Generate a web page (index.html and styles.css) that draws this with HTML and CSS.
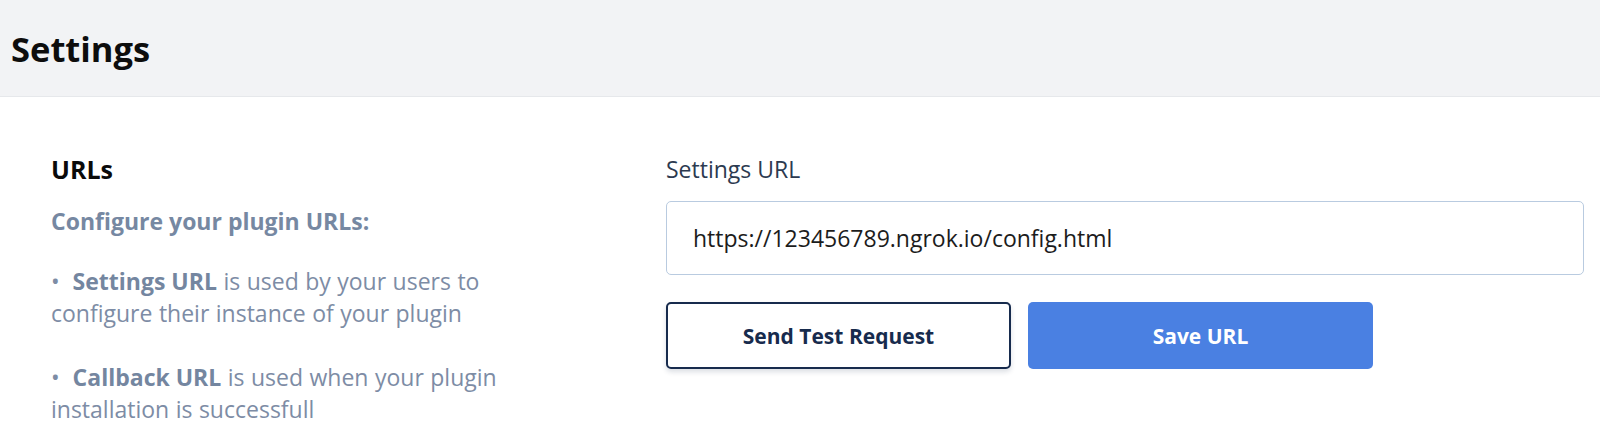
FILE: index.html
```html
<!DOCTYPE html>
<html lang="en">
<head>
    <meta charset="UTF-8">
    <meta name="viewport" content="width=device-width, initial-scale=1.0">
    <title>Settings</title>
    <link rel="stylesheet" href="styles.css">
</head>
<body>
    <header class="page-header">
        <h1>Settings</h1>
    </header>

    <main class="section">
        <div class="section-info">
            <h2>URLs</h2>
            <p class="lead">Configure your plugin URLs:</p>
            <p class="note">&bull;&nbsp; <b>Settings URL</b> is used by your users to configure their instance of your plugin</p>
            <p class="note">&bull;&nbsp; <b>Callback URL</b> is used when your plugin installation is successfull</p>
        </div>

        <div class="section-form">
            <label for="settings-url">Settings URL</label>
            <input type="text" id="settings-url" value="https://123456789.ngrok.io/config.html">
            <div class="actions">
                <button class="btn btn-outline">Send Test Request</button>
                <button class="btn btn-primary">Save URL</button>
            </div>
        </div>
    </main>
</body>
</html>
```

FILE: styles.css
```css
body { margin: 0; font-family: "Open Sans", "Noto Sans", sans-serif; background: #fff; color: #111; }

.page-header { height: 96px; background: #f2f3f5; border-bottom: 1px solid #e6e8eb; display: flex; align-items: center; padding-left: 11px; }
.page-header h1 { margin: 0; font-size: 34.5px; font-weight: 700; color: #0d0d0d; }

.section { display: flex; padding: 56px 16px 0 51px; gap: 165px; }

.section-info { width: 450px; flex-shrink: 0; }
.section-info h2 { margin: 0; font-size: 25px; font-weight: 700; line-height: 32px; color: #0a0a0a; }
.lead { margin: 20px 0 0; font-size: 23px; font-weight: 700; line-height: 32px; color: #7688a2; }
.note { margin: 28px 0 0; font-size: 23px; line-height: 32px; color: #7d8ca5; word-spacing: 0.5px; }
.note + .note { margin-top: 32px; }
.note b { color: #7486a0; word-spacing: 0; }

.section-form { flex: 1; display: flex; flex-direction: column; }
.section-form label { font-size: 23px; line-height: 32px; color: #2c3a50; }
.section-form input { margin-top: 16px; height: 74px; box-sizing: border-box; border: 1.5px solid #b9cbe0; border-radius: 5px; padding: 0 26px; font-family: inherit; font-size: 23px; color: #1c1c1c; }

.actions { display: flex; gap: 17px; margin-top: 27px; }
.btn { width: 345px; height: 67px; border-radius: 5px; font-family: inherit; font-size: 21px; font-weight: 700; }
.btn-outline { background: #fff; border: 2px solid #172b4d; color: #172b4d; box-shadow: 0 3px 5px rgba(23,43,77,0.15); }
.btn-primary { background: #4a80e2; border: none; color: #fff; }
```
